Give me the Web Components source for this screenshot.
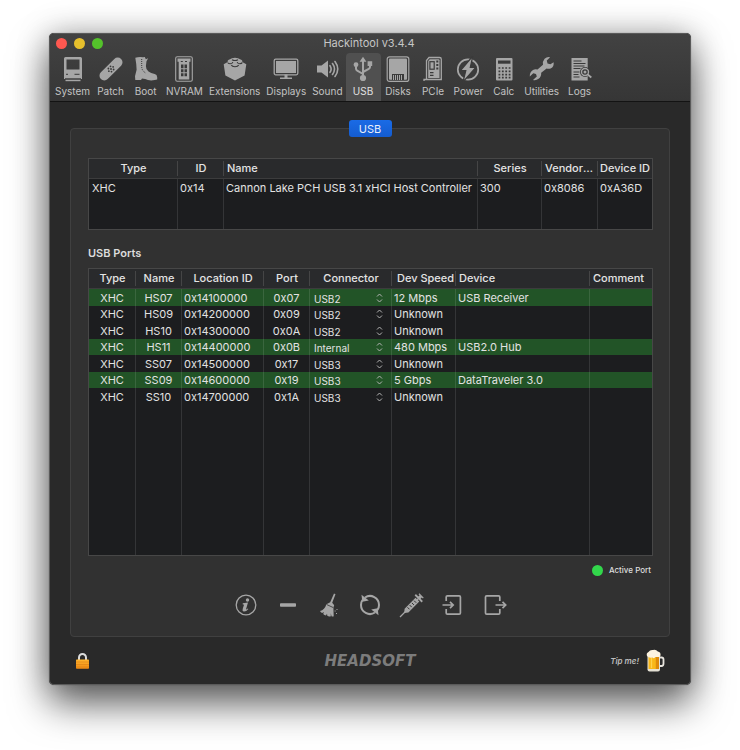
<!DOCTYPE html>
<html lang="en">
<head>
<meta charset="utf-8">
<title>Hackintool v3.4.4</title>
<style>
html { height: 100%; }
body {
  margin: 0;
  min-height: 100vh;
  box-sizing: border-box;
  padding: 33px 49px 65px;
  display: flex;
  background: #fff;
  font-family: Inter, "Liberation Sans", sans-serif;
  font-size: 11px;
  color: #e2e2e2;
}
</style>
</head>
<body>
<app-window heading="Hackintool v3.4.4">
  <tool-item slot="toolbar" icon="system">System</tool-item>
  <tool-item slot="toolbar" icon="patch">Patch</tool-item>
  <tool-item slot="toolbar" icon="boot">Boot</tool-item>
  <tool-item slot="toolbar" icon="nvram">NVRAM</tool-item>
  <tool-item slot="toolbar" icon="extensions">Extensions</tool-item>
  <tool-item slot="toolbar" icon="displays">Displays</tool-item>
  <tool-item slot="toolbar" icon="sound">Sound</tool-item>
  <tool-item slot="toolbar" icon="usb" selected>USB</tool-item>
  <tool-item slot="toolbar" icon="disks">Disks</tool-item>
  <tool-item slot="toolbar" icon="pcie">PCIe</tool-item>
  <tool-item slot="toolbar" icon="power">Power</tool-item>
  <tool-item slot="toolbar" icon="calc">Calc</tool-item>
  <tool-item slot="toolbar" icon="utilities">Utilities</tool-item>
  <tool-item slot="toolbar" icon="logs">Logs</tool-item>

  <tab-panel label="USB">
    <controller-table></controller-table>
    <section-title>USB Ports</section-title>
    <port-table></port-table>
    <status-legend>Active Port</status-legend>
    <action-bar>
      <action-button icon="info" label="Info"></action-button>
      <action-button icon="minus" label="Remove"></action-button>
      <action-button icon="broom" label="Clear"></action-button>
      <action-button icon="refresh" label="Refresh"></action-button>
      <action-button icon="syringe" label="Inject"></action-button>
      <action-button icon="import" label="Import"></action-button>
      <action-button icon="export" label="Export"></action-button>
    </action-bar>
  </tab-panel>
  <app-footer slot="footer">HEADSOFT</app-footer>
</app-window>

<script>
const G = '#a6a6a6', D = '#3a3a3a';
const ICONS = {
  system: `<path fill="${G}" fill-rule="evenodd" d="M5.500 1h15q1.500 0 1.500 1.500V23H4V2.500Q4 1 5.500 1zM6.500 3.500v10h13v-10z"/><path fill="${G}" d="M5.500 23.600h15v1.600h-15z"/><path stroke="${D}" d="M6 18.300h2M14.500 18.300h5M5 22.800h16"/>`,
  patch: `<g transform="rotate(-45 13 13)"><rect x="-1.300" y="8.200" width="28.600" height="9.600" rx="4.800" fill="${G}"/><g fill="${D}"><circle cx="10" cy="13" r=".9"/><circle cx="13" cy="13" r=".9"/><circle cx="16" cy="13" r=".9"/><circle cx="11.500" cy="10.800" r=".9"/><circle cx="14.500" cy="10.800" r=".9"/><circle cx="11.500" cy="15.200" r=".9"/><circle cx="14.500" cy="15.200" r=".9"/></g></g>`,
  boot: `<path fill="${G}" d="M2.300 1.700Q6 .6 10 1.200l1.800-.2 1 2.300 2.400-1-1.700 3-.6 4.800q-.1 3.500 2.600 5.500 2.400 1.700 6.200 2.500 2.400.6 2.500 3.200v2.200q-2 .8-6 .9-3.500 0-6-1.300l-3.200-.5-1 1.300H2.300l-.3-3.700 1.600-6.500Q3.500 8 2.300 1.700z"/><path stroke="${D}" stroke-width="1" stroke-dasharray="1 1" fill="none" d="M8.700 3v8q.3 4 4 6"/>`,
  nvram: `<rect x="4.700" y=".7" width="16.600" height="24.600" rx="1.500" fill="none" stroke="${G}" stroke-width="1.100"/><path fill="${G}" d="M6.500 2.500h13v3.200h-1.200V23.500H7.700V5.700H6.500z"/><path fill="${D}" d="M9.800 5h2v1h-2zM14 5h2v1h-2zM10 8.500h2.500v3.700H10zM13.500 8.500H16v3.700h-2.500zM10 13.200h2.500v3H10zM13.500 13.200H16v3h-2.500zM10 17.200h2.500v3H10zM13.500 17.200H16v3h-2.500z"/>`,
  extensions: `<path fill="${G}" d="M1.700 8.300l4-2.400q-.5-2 2.300-2.600 1.500-1.500 5-1.500t5 1.500q2.800.6 2.300 2.600l4 2.400-1.700 11.200L13 24.600 3.400 19.500z"/><g fill="none" stroke="${D}" stroke-width="1.100"><path d="M5.700 6.500q.3 1.300 2.600 1.200t2.500-1.700M15.200 6q.3 1.700 2.500 1.700t2.600-1.200M9.300 9q.8 1.700 3.700 1.700T16.700 9M10 3.700q3 1.700 6 0"/></g>`,
  displays: `<rect x="1.200" y="3.200" width="23.600" height="15.600" rx="1.500" fill="none" stroke="${G}" stroke-width="1.300"/><rect x="3" y="5" width="20" height="12" fill="${G}"/><path fill="${G}" d="M11.500 18.500h3V21.500h4.500V23H7v-1.500h4.500z"/>`,
  sound: `<path fill="${G}" d="M3 9.500h4.500L14 4.500v17l-6.500-5H3z"/><path fill="none" stroke="${G}" stroke-width="1.600" stroke-linecap="round" d="M16 9.700q2.300 3.300 0 6.600M18.500 7.500q4 5.500 0 11M21 5.500q5.500 7.500 0 15"/>`,
  usb: `<path fill="none" stroke="${G}" stroke-width="2" d="M13 4.500V21M6 9.500v3.300q0 1.200 1.200 1.800L13 18M20 8v3q0 1.200-1.200 1.800L13 16"/><path fill="${G}" d="M13 .8l3.400 5H9.600zM17.600 5.300h4.600v4.600h-4.600z"/><circle cx="13" cy="22" r="3.100" fill="${G}"/><circle cx="6" cy="8.700" r="2.400" fill="${G}"/>`,
  disks: `<rect x="2.200" y=".8" width="21.600" height="24.600" rx="2.200" fill="none" stroke="${G}" stroke-width="1.200"/><rect x="4" y="2.500" width="18" height="21.200" rx="1" fill="${G}"/><path fill="${D}" d="M7 18h12v6H7z"/><path stroke="${G}" stroke-width="1" d="M8.500 19v5M10.500 19v5M12.500 19v5M14.500 19v5M16.500 19v5"/>`,
  pcie: `<path fill="none" stroke="${G}" stroke-width="1.300" d="M4 25V23.500h2.500V4.500L9 1.500h10.500q1.800 0 1.800 1.800V23.500H6.500"/><path fill="${G}" d="M8.200 5l1.500-1.800h8.800q1 0 1 1V22H8.200z"/><rect x="9.900" y="5.700" width="4.300" height="7.500" fill="none" stroke="${D}" stroke-width="1.200"/><path fill="${D}" d="M16.300 4.500h2v2h-2zM16.300 8h2v2h-2zM16.300 11.500h2v2h-2zM10 16h3.500v1.300H10zM10 18.800h3.500V20H10z"/>`,
  power: `<circle cx="13" cy="13.500" r="10.200" fill="none" stroke="${G}" stroke-width="1.700"/><path fill="${G}" stroke="${D}" stroke-width="1.200" d="M17.800 0L5.500 14.500h5.300L8 26 20.800 11.300h-5.500z"/>`,
  calc: `<rect x="5" y="2" width="16.500" height="22.500" rx="1" fill="${G}"/><path fill="${D}" d="M7 4.500h12.500v3.200H7z"/><path stroke="${D}" stroke-width="1.700" stroke-dasharray="1.800 1.600" d="M7.500 12h12.500M7.500 15.300h12.500M7.500 18.600h12.500M7.500 21.700h12.500"/>`,
  utilities: `<path fill="${G}" d="M24.600 6.200q.8 4.500-3 6.200-2 .8-4 .2l-5.400 4.200q.2 4-2.600 6Q7 24.800 4 24l3.800-3.500-.8-2.600-2.700-.6-3.500 3.300Q.5 16 4 14q2.200-1.200 4.500-.4l5.500-4.800q-.6-3.500 1.600-6 2.400-2.300 5.500-1.600L17.800 4.500l.7 3 2.900.7z"/>`,
  logs: `<path fill="${G}" d="M4.500 2h16.200v22.500H4.500z"/><path stroke="${D}" stroke-width="1" d="M6.500 5h8M6.500 7.500h12M6.500 10h11M6.500 12.500h7M6.500 16h6M6.500 18.500h5M6.500 21h6"/><circle cx="18" cy="16" r="5" fill="${D}"/><circle cx="18" cy="16" r="3.500" fill="none" stroke="${G}" stroke-width="1.400"/><circle cx="18" cy="16" r="1.500" fill="${G}"/><path stroke="${G}" stroke-width="1.800" d="M20.700 18.500l3.600 3"/>`,
  info: `<circle cx="13" cy="13" r="9.800" fill="none" stroke="${G}" stroke-width="1.300"/><circle cx="14.500" cy="8" r="1.700" fill="${G}"/><path fill="${G}" d="M9.800 11.300l5.200-.9-2 6.800q-.2.900 1.700-.7l.6.500q-2.400 3-4.700 2.500-1.600-.5-.9-2.500l1.300-4.300-1.400-.5z"/>`,
  minus: `<rect x="5" y="11.300" width="16" height="3.400" rx=".8" fill="${G}"/>`,
  broom: `<path fill="${G}" d="M18 1.500l1.500.7-3.300 8.600 2 2.400-.8 2.200.3 8.800q-1 .5-2.200 0l-.7-3v3q-2 .5-3.500-.4l-.3-2-1 1.700q-1.800-.4-2.800-1.600l.7-2-1.800 1.200Q4.800 20.500 4 19q4.700-1 6.400-6.700l3.800-2z"/><path stroke="#313131" stroke-width=".8" d="M10.600 12.500l6.500 3"/><path fill="${G}" d="M18.600 18.500h1v1h-1zM20.500 17h1v1h-1zM20 21h1v1h-1z"/>`,
  refresh: `<path fill="none" stroke="${G}" stroke-width="2" d="M8 5.500A9 9 0 0 1 22 13q0 3-1.500 5M18 20.500A9 9 0 0 1 4 13q0-3 1.500-5"/><path fill="${G}" d="M4.500 2.800l.8 6.900 6.500-1.200zM21.500 23.200l-.8-6.900-6.500 1.200z"/>`,
  syringe: `<path fill="none" stroke="${G}" stroke-width="1.300" d="M1 25l6-6M18 8l4-4M20 1.800l4.300 4.300"/><path fill="${G}" d="M5.600 16.700L16.500 5.800l3.800 3.800L9.400 20.500l-4.200.6zM15.600 3.400l1.300-1.300 7 7-1.300 1.300zM19.200 4.700l1.600-1.600 2.200 2.200-1.600 1.600z"/><path stroke="#313131" stroke-width="1" d="M8.500 15.300l2 2M10.700 13.100l2 2M12.900 10.900l2 2M15.100 8.700l2 2"/>`,
  import: `<path fill="none" stroke="${G}" stroke-width="1.700" d="M6.200 9V5q0-1.200 1.200-1.200h11.800q1.200 0 1.200 1.200v16q0 1.200-1.200 1.200H7.400Q6.200 22.200 6.200 21v-4M2.500 13h10M10 9.800l3.200 3.200L10 16.200"/>`,
  export: `<path fill="none" stroke="${G}" stroke-width="1.700" d="M17.800 9V5q0-1.200-1.200-1.200H4.700Q3.500 3.800 3.500 5v16q0 1.200 1.200 1.200h11.900q1.200 0 1.200-1.200v-4M13.500 13H23M20.500 9.800l3.200 3.200-3.200 3.200"/>`
};
const icon = (n) => `<svg viewBox="0 0 26 26" width="26" height="26" aria-hidden="true">${ICONS[n]}</svg>`;

class Base extends HTMLElement {
  connectedCallback() {
    if (this.shadowRoot) return;
    const t = document.createElement('template');
    t.innerHTML = this.view();
    this.attachShadow({ mode: 'open' }).append(t.content.cloneNode(true));
  }
}

customElements.define('tool-item', class extends Base {
  view() {
    return `<style>
      :host { display: flex; }
      button { font: 10px/14px Inter, "Liberation Sans", sans-serif; color: #c3c3c3; background: none; border: 0; margin: 0;
        padding: 3px 3px 0; min-width: 35px; display: flex; flex-direction: column; align-items: center; gap: 2px;
        border-radius: 4px 4px 0 0; }
      svg { display: block; }
      :host([selected]) button { background: #505050; color: #e0e0e0; }
    </style><button type="button">${icon(this.getAttribute('icon'))}<slot></slot></button>`;
  }
});

customElements.define('app-window', class extends Base {
  view() {
    return `<style>
      :host { flex: 1; min-width: 0; display: flex; flex-direction: column; box-sizing: border-box; border-radius: 5px;
        background: #292929; overflow: visible;
        box-shadow: inset 0 0 0 1px #5a5a5a, 0 0 1px #00000080, 0 19px 38px #00000098, 0 0 32px #00000040; }
      header { height: 68px; margin: 1px 1px 0; border-bottom: 1px solid #131313; background: linear-gradient(#424242, #363636);
        border-radius: 4px 4px 0 0; display: flex; flex-direction: column; box-sizing: border-box; }
      .bar { display: grid; grid-template-columns: 1fr auto 1fr; align-items: center; height: 18px; flex: none; padding: 0 8px 0 6px; }
      .lights { display: flex; gap: 7px; }
      .lights button { width: 11px; height: 11px; border-radius: 50%; border: 0; padding: 0; background: #fe5850; }
      .lights button:nth-child(2) { background: #e6bf2c; }
      .lights button:nth-child(3) { background: #54c22b; }
      h1 { margin: 0; font-size: 11px; line-height: 18px; font-weight: 400; color: #c6c6c6; }
      nav { display: flex; flex: 1; padding: 1px 2px 0; }
      main { flex: 1; display: flex; padding: 18px 20px 0; margin: 0 1px; }
    </style>
    <header><div class="bar"><div class="lights"><button aria-label="Close"></button><button aria-label="Minimize"></button><button aria-label="Zoom"></button></div><h1>${this.getAttribute('heading')}</h1></div>
    <nav><slot name="toolbar"></slot></nav></header>
    <main><slot></slot></main><slot name="footer"></slot>`;
  }
});

customElements.define('tab-panel', class extends Base {
  view() {
    return `<style>
      :host { flex: 1; min-width: 0; display: flex; flex-direction: column; }
      .tab { align-self: center; z-index: 1; width: 43px; height: 17px; border: 0; padding: 0; border-radius: 3px; color: #e8eefb;
        background: linear-gradient(#1a6be6, #145cd0); font: 11px/16px Inter, "Liberation Sans", sans-serif; }
      section { flex: 1; margin-top: -9px; padding: 29px 16px 0 17px; background: #313131; border: 1px solid #404040; border-radius: 4px;
        display: flex; flex-direction: column; }
    </style><button class="tab" role="tab" aria-selected="true">${this.getAttribute('label')}</button><section role="tabpanel"><slot></slot></section>`;
  }
});

customElements.define('section-title', class extends Base {
  view() {
    return `<style>:host { display: block; } h2 { margin: 15px 0 6px; font-size: 11px; line-height: 17px; font-weight: 600; color: #dcdcdc; }</style><h2><slot></slot></h2>`;
  }
});

const TABLE_CSS = `
  :host { display: flex; border: 1px solid #474747; background: #1c1d1f; box-sizing: border-box; }
  table { width: 100%; table-layout: fixed; border-collapse: separate; border-spacing: 0; font-size: 11px; line-height: 16px; }
  th { height: 19px; padding: 0 3px; font-weight: 500; color: #e4e4e4; border-bottom: 1px solid #3c3c3d; line-height: 17px;
    background: linear-gradient(#454546, #454546) right center / 1px 15px no-repeat #292a2c; overflow: hidden; text-overflow: ellipsis; white-space: nowrap; }
  th:last-child { background: #292a2c; }
  td { padding: 0 2px; border-right: 1px solid #ffffff1c; white-space: nowrap; overflow: hidden; }
  td:first-child { padding: 0 3px; }
  td:last-child { border-right: 0; }
  .l { text-align: left; } .c { text-align: center; }
  .fill td { height: auto; }`;

customElements.define('controller-table', class extends Base {
  view() {
    return `<style>${TABLE_CSS} :host { min-height: 72px; } tbody tr:first-child td { height: 17px; } .wide { padding: 0 1px; text-overflow: clip; }</style>
    <table><colgroup><col style="width:89px"><col style="width:46px"><col><col style="width:64px"><col style="width:56px"><col style="width:54px"></colgroup>
    <thead><tr><th>Type</th><th>ID</th><th class="l">Name</th><th>Series</th><th>Vendor ID</th><th class="wide">Device ID</th></tr></thead>
    <tbody><tr><td>XHC</td><td>0x14</td><td>Cannon Lake PCH USB 3.1 xHCI Host Controller</td><td>300</td><td>0x8086</td><td>0xA36D</td></tr>
    <tr class="fill"><td></td><td></td><td></td><td></td><td></td><td></td></tr></tbody></table>`;
  }
});

customElements.define('port-connector', class extends Base {
  view() {
    const v = this.getAttribute('value');
    return `<style>
      :host { display: grid; align-items: center; height: 16px; }
      select, svg { grid-area: 1 / 1; }
      select { appearance: none; border: 0; margin: 0; padding: 2px 12px 0 2px; background: none; color: inherit; width: 100%; height: 16px;
        font: 10px/14px Inter, "Liberation Sans", sans-serif; }
      svg { justify-self: end; margin-right: 6px; pointer-events: none; }
    </style><select aria-label="Connector for ${this.getAttribute('port')}">${['USB2', 'USB3', 'Internal'].map(o => `<option${o === v ? ' selected' : ''}>${o}</option>`).join('')}</select>
    <svg width="7" height="10" viewBox="0 0 7 10" fill="none" stroke="#b4b4b4" stroke-width="1"><path d="M1 3.500l2.500-2.500L6 3.500M1 6.500L3.500 9 6 6.500"/></svg>`;
  }
});

const PORTS = [
  ['HS07', '0x14100000', '0x07', 'USB2', '12 Mbps', 'USB Receiver', 1],
  ['HS09', '0x14200000', '0x09', 'USB2', 'Unknown', '', 0],
  ['HS10', '0x14300000', '0x0A', 'USB2', 'Unknown', '', 0],
  ['HS11', '0x14400000', '0x0B', 'Internal', '480 Mbps', 'USB2.0 Hub', 1],
  ['SS07', '0x14500000', '0x17', 'USB3', 'Unknown', '', 0],
  ['SS09', '0x14600000', '0x19', 'USB3', '5 Gbps', 'DataTraveler 3.0', 1],
  ['SS10', '0x14700000', '0x1A', 'USB3', 'Unknown', '', 0]
];
customElements.define('port-table', class extends Base {
  view() {
    return `<style>${TABLE_CSS}
      :host { min-height: 288px; }
      tbody tr:not(.fill) td { height: 16px; }
      tbody tr:nth-child(odd):not(.fill) td { height: 17px; }
      .on td { background-color: #225427; }
      .speed { padding: 0 0 0 3px; }
    </style>
    <table><colgroup><col style="width:47px"><col style="width:46px"><col style="width:82px"><col style="width:46px"><col style="width:82px"><col style="width:64px"><col><col style="width:62px"></colgroup>
    <thead><tr><th>Type</th><th>Name</th><th>Location ID</th><th>Port</th><th>Connector</th><th class="speed">Dev Speed</th><th class="l">Device</th><th class="l">Comment</th></tr></thead>
    <tbody>${PORTS.map(([n, loc, p, c, s, d, on]) => `<tr class="${on ? 'on' : ''}"><td class="c">XHC</td><td class="c">${n}</td><td>${loc}</td><td class="c">${p}</td><td><port-connector port="${n}" value="${c}"></port-connector></td><td>${s}</td><td>${d}</td><td></td></tr>`).join('')}
    <tr class="fill">${'<td></td>'.repeat(8)}</tr></tbody></table>`;
  }
});

customElements.define('status-legend', class extends Base {
  view() {
    return `<style>:host { display: flex; justify-content: flex-end; align-items: center; gap: 6px; padding: 8px 2px 0 0; font-size: 8px; line-height: 12px; font-weight: 500; color: #dedede; }
      i { width: 11px; height: 11px; border-radius: 50%; background: #32d74b; }</style><i></i><slot></slot>`;
  }
});

customElements.define('action-bar', class extends Base {
  view() {
    return `<style>:host { display: grid; grid-auto-flow: column; grid-auto-columns: 1fr; width: 100%; max-width: 290px; align-self: center; margin: 16px 0 18px; }</style><slot></slot>`;
  }
});
customElements.define('action-button', class extends Base {
  view() {
    return `<style>:host { display: grid; justify-content: center; } button { border: 0; background: none; padding: 0; margin: 0; } svg { display: block; }</style>
    <button type="button" aria-label="${this.getAttribute('label')}">${icon(this.getAttribute('icon'))}</button>`;
  }
});

customElements.define('app-footer', class extends Base {
  view() {
    return `<style>
      :host { display: grid; grid-template-columns: 1fr auto 1fr; align-items: center; height: 48px; padding: 0 26px; }
      button, a { border: 0; background: none; padding: 0; color: inherit; text-decoration: none; }
      button { justify-self: start; } svg { display: block; }
      .brand { font: italic bold 15px/16px "DejaVu Sans", sans-serif; color: #7c7c7c; }
      a { justify-self: end; display: flex; align-items: center; gap: 7px; font-size: 8px; font-style: italic; font-weight: 600; color: #bdbdbd; }
    </style>
    <button type="button" aria-label="Unlock"><svg width="15" height="18" viewBox="0 0 15 18"><defs><linearGradient id="g" x2="0" y2="1"><stop stop-color="#ffb52e"/><stop offset="1" stop-color="#f08a12"/></linearGradient></defs><path d="M4 9V5.500a3.500 3.500 0 0 1 7 0V9" fill="none" stroke="#dcdcdc" stroke-width="2"/><rect x="1" y="7.500" width="13" height="9.300" rx=".8" fill="url(#g)"/><path d="M1 10h13M1 12.500h13M1 15h13" stroke="#d98016" stroke-width=".6"/></svg></button>
    <span class="brand"><slot></slot></span>
    <a href="#tip">Tip me!<svg width="19" height="24" viewBox="0 0 19 24"><path d="M13 8.500h2.500q2 0 2 2v4q0 2.500-2 2.500H13" fill="none" stroke="#e9e6df" stroke-width="1.800"/><path d="M1.500 6h12.500v14.500q0 2-2 2H3.500q-2 0-2-2z" fill="#e4e0d4"/><path d="M2.500 7h10.500v13H2.500z" fill="#f9b719"/><path d="M9.800 8H13v12H9.800z" fill="#df8a0a"/><path d="M5.500 9v10" stroke="#ffd24d" stroke-width="1.300"/><path d="M1 7Q0 4 2.500 3 4 .5 7 1q3-.8 4.800 1.500Q15 3 14.500 6.500 14 8.500 12 8H9.500Q8 10 6.500 8.500 3 9.500 1 7z" fill="#fdf3df"/></svg></a>`;
  }
});
</script>
</body>
</html>
